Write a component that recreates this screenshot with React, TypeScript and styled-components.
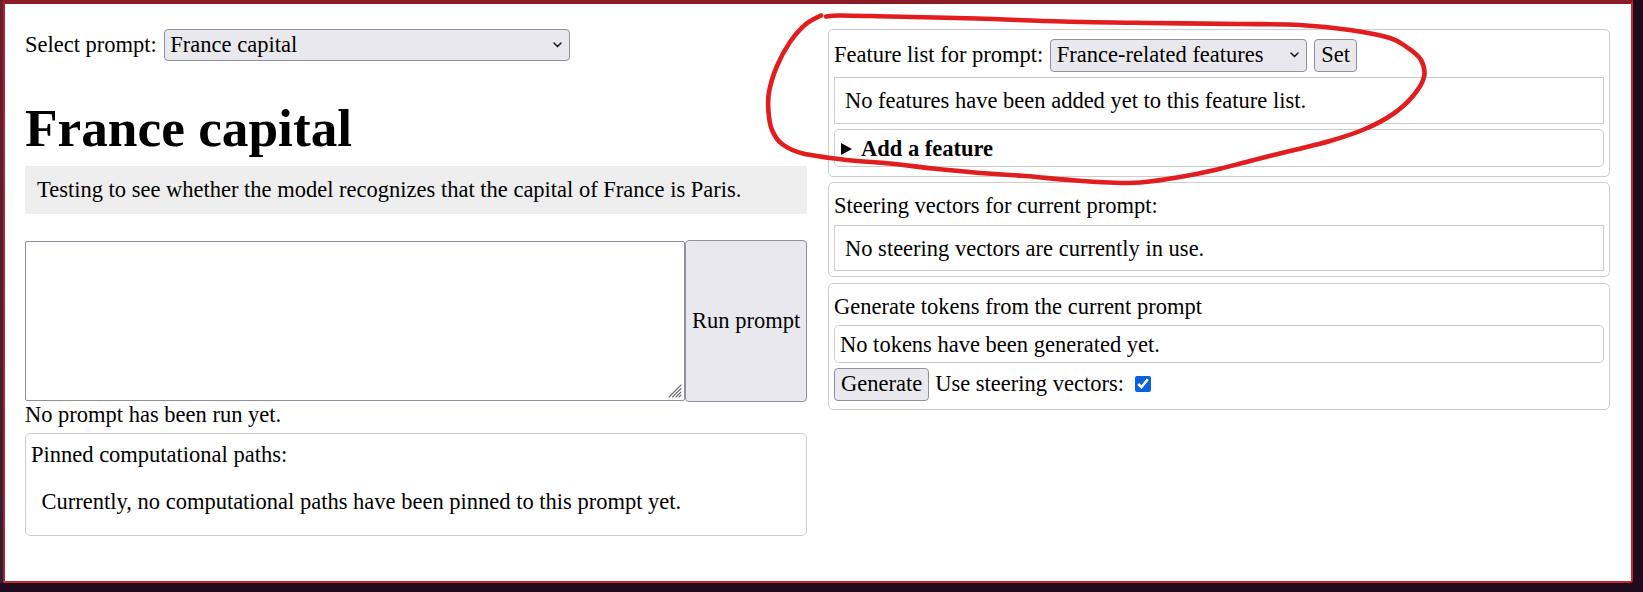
import React from "react";
import styled, { createGlobalStyle } from "styled-components";

const GlobalStyle = createGlobalStyle`
  html, body { margin: 0; padding: 0; }
  body {
    background: #1f0a1e;
    font-family: "Liberation Serif", "Times New Roman", serif;
    font-size: 22.5px;
    line-height: 26px;
    color: #000;
    overflow: hidden;
  }
  #root { width: 1643px; height: 592px; }
`;

const Desktop = styled.div`
  position: relative;
  width: 1643px;
  height: 592px;
  display: flex;
  align-items: flex-start;
  background: #1f0a1e;
`;

const DockEdge = styled.div`
  width: 3px;
  height: 583px;
  background: linear-gradient(#6a1d2a, #2d2234);
`;

const Window = styled.main`
  box-sizing: border-box;
  width: 1630px;
  height: 583px;
  background: #fff;
  border-top: 4px solid #8b1c25;
  border-left: 2px solid #b3222b;
  border-right: 2px solid #c4282c;
  border-bottom: 2px solid #c4282c;
  border-bottom-right-radius: 3px;
  padding: 25px 21px 0 20px;
  display: grid;
  grid-template-columns: 782px 782px;
  column-gap: 21px;
  align-items: start;
`;

const Column = styled.section<{ $gap?: number }>`
  display: flex;
  flex-direction: column;
  gap: ${(p) => p.$gap ?? 0}px;
  min-width: 0;
`;

const InlineRow = styled.div<{ $gap: number; $height: number }>`
  display: flex;
  align-items: center;
  gap: ${(p) => p.$gap}px;
  height: ${(p) => p.$height}px;
  white-space: nowrap;
`;

const SelectWrap = styled.span<{ $width: number }>`
  position: relative;
  display: inline-flex;
  width: ${(p) => p.$width}px;
  height: 32.4px;
  flex: none;
`;

const NativeSelect = styled.select`
  appearance: none;
  -webkit-appearance: none;
  box-sizing: border-box;
  width: 100%;
  height: 100%;
  margin: 0;
  padding: 0 28px 0 5.5px;
  border: 1px solid #8f8f9d;
  border-radius: 4px;
  background: #e9e9ed;
  color: #000;
  font: inherit;
  line-height: 26px;
`;

const Chevron = styled.svg`
  position: absolute;
  right: 8px;
  top: 50%;
  width: 9px;
  height: 6px;
  transform: translateY(-50%);
  pointer-events: none;
`;

const Button = styled.button<{ $width?: number; $height: number }>`
  box-sizing: border-box;
  flex: none;
  ${(p) => (p.$width ? `width: ${p.$width}px;` : "")}
  height: ${(p) => p.$height}px;
  margin: 0;
  padding: 0 6px;
  border: 1px solid #8f8f9d;
  border-radius: 4px;
  background: #e9e9ed;
  color: #000;
  font: inherit;
  line-height: 26px;
  white-space: nowrap;
`;

const Title = styled.h1`
  margin: 36.2px 0 6.6px;
  font-size: 53.3px;
  line-height: 61.5px;
  font-weight: bold;
`;

const Description = styled.div`
  background: #eeeeee;
  padding: 11px 12px;
`;

const PromptRow = styled.div`
  margin-top: 26px;
  display: flex;
  align-items: center;
  height: 162.7px;
`;

const TextAreaWrap = styled.div`
  position: relative;
  width: 660px;
  height: 160px;
  flex: none;
`;

const PromptInput = styled.textarea`
  display: block;
  box-sizing: border-box;
  width: 100%;
  height: 100%;
  margin: 0;
  border: 1px solid #8f8f9d;
  border-radius: 2px;
  resize: none;
  font: inherit;
  background: #fff;
`;

const Grip = styled.svg`
  position: absolute;
  right: 3px;
  bottom: 3px;
  width: 15px;
  height: 15px;
  pointer-events: none;
`;

const Line = styled.div`
  white-space: nowrap;
`;

const BorderBox = styled.div<{ $radius: number; $pad: string }>`
  border: 1px solid #cdcdcd;
  border-radius: ${(p) => p.$radius}px;
  padding: ${(p) => p.$pad};
  white-space: nowrap;
`;

const PinnedBox = styled(BorderBox)`
  margin-top: 4.6px;
`;

const Indented = styled.div`
  margin-top: 20.7px;
  padding-left: 10.5px;
`;

const Panel = styled.div<{ $pt: number; $pb: number }>`
  border: 1px solid #cdcdcd;
  border-radius: 5px;
  padding: ${(p) => p.$pt}px 5px ${(p) => p.$pb}px;
  display: flex;
  flex-direction: column;
  gap: 5.3px;
`;

const Disclosure = styled.details`
  border: 1px solid #cdcdcd;
  border-radius: 5px;
`;

const Summary = styled.summary`
  display: flex;
  align-items: center;
  padding: 5.7px 5px 4.3px;
  font-weight: bold;
  list-style: none;
  cursor: pointer;
  &::-webkit-details-marker { display: none; }
`;

const Triangle = styled.span`
  width: 0;
  height: 0;
  margin: 1px 9px 0 1px;
  border-left: 11px solid #000;
  border-top: 6px solid transparent;
  border-bottom: 6px solid transparent;
`;

const Check = styled.input`
  width: 16px;
  height: 16px;
  margin: 0 0 0 5px;
  accent-color: #0b60df;
`;

const Annotation = styled.svg`
  position: absolute;
  left: 0;
  top: 0;
  width: 1643px;
  height: 592px;
  pointer-events: none;
`;

type Pt = [number, number];

const loop: Pt[] = [
  [821, 15.5], [806, 24], [790, 42], [777, 66], [769, 92], [768.5, 112],
  [772, 130], [782, 144], [803, 153.5], [847, 160], [890, 163.5],
  [933, 168.5], [977, 172.7], [1025, 176], [1070, 180], [1110, 182.5],
  [1140, 182.5], [1180, 177], [1215, 170], [1250, 161], [1290, 151],
  [1330, 141], [1365, 129], [1393, 114], [1413, 96], [1424, 77],
  [1421, 60], [1408, 48], [1390, 38], [1350, 30], [1300, 25], [1240, 24],
  [1150, 23], [1063, 21.5], [977, 18.5], [890, 16.5], [840, 15.5], [826, 16.5],
];

function smoothPath(pts: Pt[]): string {
  let d = `M${pts[0][0]} ${pts[0][1]}`;
  for (let i = 0; i < pts.length - 1; i++) {
    const p0 = pts[i - 1] ?? pts[i];
    const p1 = pts[i];
    const p2 = pts[i + 1];
    const p3 = pts[i + 2] ?? p2;
    const c1x = p1[0] + (p2[0] - p0[0]) / 6;
    const c1y = p1[1] + (p2[1] - p0[1]) / 6;
    const c2x = p2[0] - (p3[0] - p1[0]) / 6;
    const c2y = p2[1] - (p3[1] - p1[1]) / 6;
    d += ` C${c1x.toFixed(1)} ${c1y.toFixed(1)} ${c2x.toFixed(1)} ${c2y.toFixed(1)} ${p2[0]} ${p2[1]}`;
  }
  return d;
}

const loopPath = smoothPath(loop);

const ChevronIcon = () => (
  <Chevron viewBox="0 0 9 6">
    <path d="M1 1 L4.5 4.6 L8 1" fill="none" stroke="#1b1b1f" strokeWidth="1.5" strokeLinecap="round" strokeLinejoin="round" />
  </Chevron>
);

export default function App() {
  return (
    <>
      <GlobalStyle />
      <Desktop>
        <DockEdge />
        <Window>
          <Column>
            <InlineRow $gap={7} $height={32.4}>
              <span>Select prompt:</span>
              <SelectWrap $width={406}>
                <NativeSelect defaultValue="france">
                  <option value="france">France capital</option>
                </NativeSelect>
                <ChevronIcon />
              </SelectWrap>
            </InlineRow>
            <Title>France capital</Title>
            <Description>
              Testing to see whether the model recognizes that the capital of France is Paris.
            </Description>
            <PromptRow>
              <TextAreaWrap>
                <PromptInput />
                <Grip viewBox="0 0 15 15">
                  <g stroke="#6b6b73" strokeWidth="1.1" strokeLinecap="round">
                    <line x1="14" y1="2" x2="2" y2="14" />
                    <line x1="14" y1="5.5" x2="5.5" y2="14" />
                    <line x1="14" y1="9" x2="9" y2="14" />
                    <line x1="14" y1="12" x2="12" y2="14" />
                  </g>
                </Grip>
              </TextAreaWrap>
              <Button $width={122} $height={162.7}>Run prompt</Button>
            </PromptRow>
            <Line>No prompt has been run yet.</Line>
            <PinnedBox $radius={5} $pad="8.3px 5px 20.5px">
              <Line>Pinned computational paths:</Line>
              <Indented>Currently, no computational paths have been pinned to this prompt yet.</Indented>
            </PinnedBox>
          </Column>

          <Column $gap={5.7}>
            <Panel $pt={9.3} $pb={8.7}>
              <InlineRow $gap={7} $height={32.4}>
                <span>Feature list for prompt:</span>
                <SelectWrap $width={257}>
                  <NativeSelect defaultValue="france">
                    <option value="france">France-related features</option>
                  </NativeSelect>
                  <ChevronIcon />
                </SelectWrap>
                <Button $height={32.4}>Set</Button>
              </InlineRow>
              <BorderBox $radius={0} $pad="10px 10px 8.7px">
                No features have been added yet to this feature list.
              </BorderBox>
              <Disclosure>
                <Summary>
                  <Triangle />
                  Add a feature
                </Summary>
              </Disclosure>
            </Panel>

            <Panel $pt={10} $pb={4.9}>
              <Line>Steering vectors for current prompt:</Line>
              <BorderBox $radius={0} $pad="10px 10px 8.7px">
                No steering vectors are currently in use.
              </BorderBox>
            </Panel>

            <Panel $pt={10} $pb={8.3}>
              <Line>Generate tokens from the current prompt</Line>
              <BorderBox $radius={5} $pad="5.7px 5px 3.7px">
                No tokens have been generated yet.
              </BorderBox>
              <InlineRow $gap={6} $height={32.7}>
                <Button $height={32.7}>Generate</Button>
                <span>Use steering vectors:</span>
                <Check type="checkbox" defaultChecked />
              </InlineRow>
            </Panel>
          </Column>
        </Window>
        <Annotation viewBox="0 0 1643 592">
          <path d={loopPath} fill="none" stroke="#e11d1d" strokeWidth="4.6" strokeLinecap="round" strokeLinejoin="round" />
        </Annotation>
      </Desktop>
    </>
  );
}
